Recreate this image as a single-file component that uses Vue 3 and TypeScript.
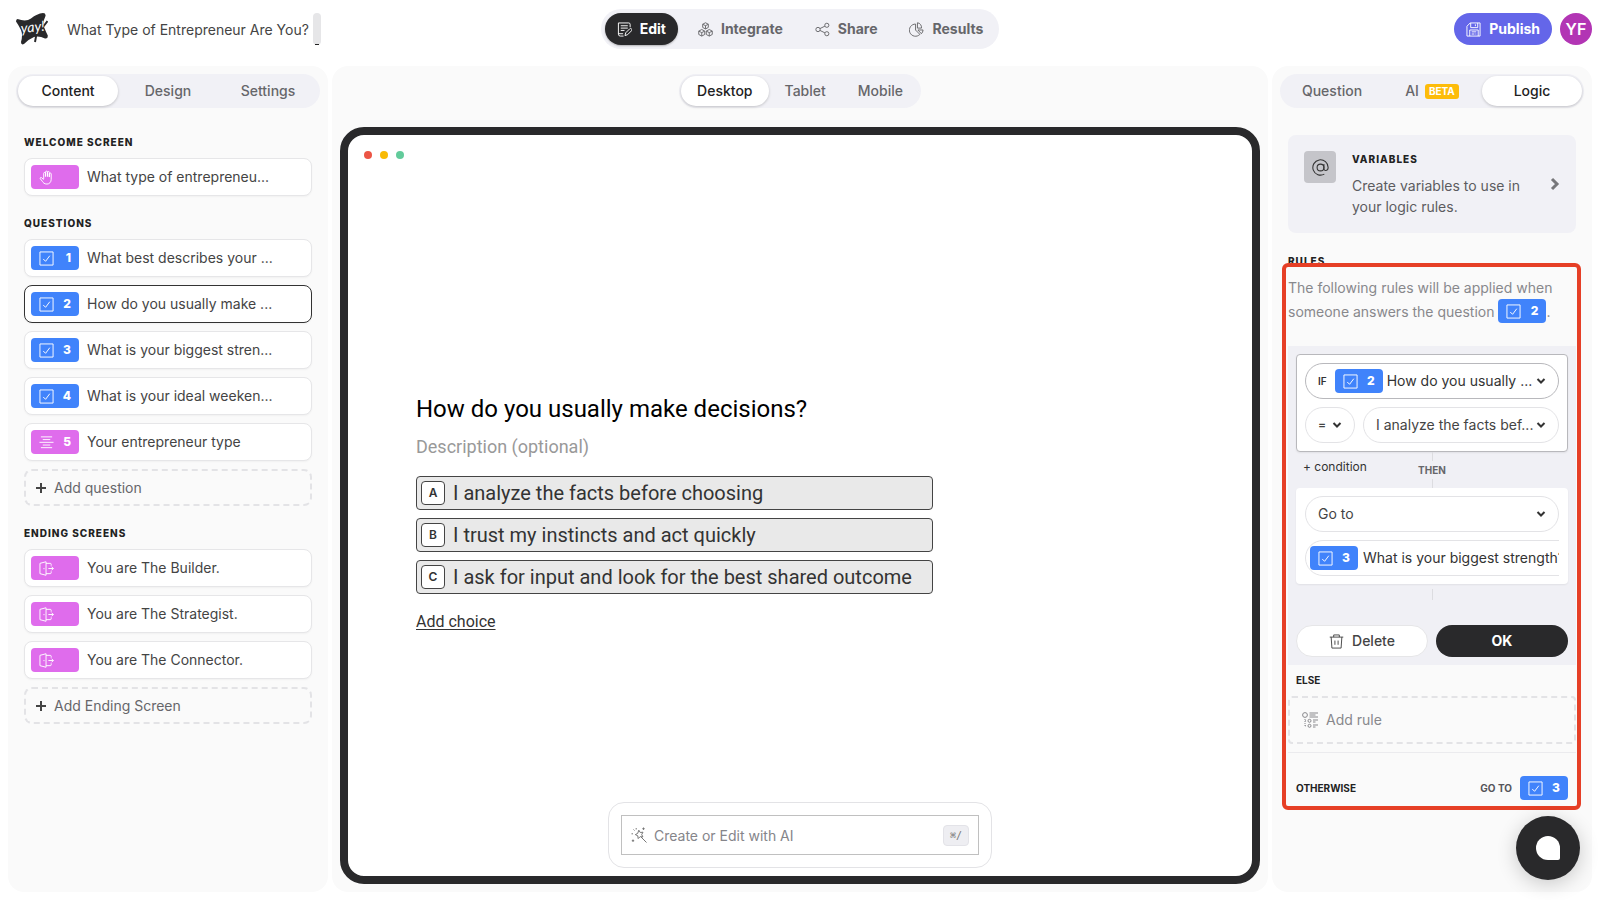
<script setup lang="ts">
import { ref } from 'vue'

interface Item {
  id: number
  text: string
  icon: string
  tone: 'blue' | 'pink'
  num?: number
}

const title = ref('What Type of Entrepreneur Are You?')
const prompt = ref('')

const mainTabs = [
  { label: 'Edit', icon: 'i-edit' },
  { label: 'Integrate', icon: 'i-cubes' },
  { label: 'Share', icon: 'i-share' },
  { label: 'Results', icon: 'i-pie' },
]
const activeMain = ref('Edit')
const leftTabs = ['Content', 'Design', 'Settings']
const activeLeft = ref('Content')
const devices = ['Desktop', 'Tablet', 'Mobile']
const activeDevice = ref('Desktop')
const rightTabs = ['Question', 'AI', 'Logic']
const activeRight = ref('Logic')

const sections: { name: string; items: Item[]; add?: string }[] = [
  {
    name: 'Welcome screen',
    items: [{ id: 10, text: 'What type of entrepreneu...', icon: 'i-hand', tone: 'pink' }],
  },
  {
    name: 'Questions',
    items: [
      { id: 1, num: 1, text: 'What best describes your ...', icon: 'i-check', tone: 'blue' },
      { id: 2, num: 2, text: 'How do you usually make ...', icon: 'i-check', tone: 'blue' },
      { id: 3, num: 3, text: 'What is your biggest stren...', icon: 'i-check', tone: 'blue' },
      { id: 4, num: 4, text: 'What is your ideal weeken...', icon: 'i-check', tone: 'blue' },
      { id: 5, num: 5, text: 'Your entrepreneur type', icon: 'i-lines', tone: 'pink' },
    ],
    add: 'Add question',
  },
  {
    name: 'Ending screens',
    items: [
      { id: 20, text: 'You are The Builder.', icon: 'i-door', tone: 'pink' },
      { id: 21, text: 'You are The Strategist.', icon: 'i-door', tone: 'pink' },
      { id: 22, text: 'You are The Connector.', icon: 'i-door', tone: 'pink' },
    ],
    add: 'Add Ending Screen',
  },
]
const selected = ref(2)

const choices = [
  { key: 'A', text: 'I analyze the facts before choosing' },
  { key: 'B', text: 'I trust my instincts and act quickly' },
  { key: 'C', text: 'I ask for input and look for the best shared outcome' },
]
</script>

<template>
  <svg class="defs" aria-hidden="true">
    <symbol id="i-edit" viewBox="0 0 16 16">
      <path d="M14 5.500V2.500a1.500 1.500 0 0 0-1.500-1.500h-11v12a2 2 0 0 0 2 2H7M1.500 12.500h5M4 4h7.500M4 6.500h7.500M4 9h4M8.500 14.500l.8-3 4.200-4.200a1.200 1.200 0 0 1 2 2l-4.200 4.200z" />
    </symbol>
    <symbol id="i-cubes" viewBox="0 0 16 16">
      <path d="M8 .8l3 1.600v3.400L8 7.400 5 5.800V2.400zM5 2.400l3 1.500 3-1.500M8 3.900v3.500M4 8l3.200 1.700v3.600L4 15 .8 13.300V9.700zM.8 9.700L4 11.300l3.200-1.600M4 11.300V15M12 8l3.200 1.700v3.600L12 15l-3.200-1.700V9.700zM8.800 9.700l3.200 1.600 3.200-1.600M12 11.300V15" />
    </symbol>
    <symbol id="i-share" viewBox="0 0 16 16">
      <circle cx="3.200" cy="8" r="2.300" /><circle cx="12.600" cy="3.500" r="2.200" /><circle cx="12.600" cy="12.500" r="2.200" />
      <path d="M5.300 7l5.300-2.600M5.300 9l5.300 2.600" />
    </symbol>
    <symbol id="i-pie" viewBox="0 0 16 16">
      <path d="M7 2.200A6.500 6.500 0 1 0 11.600 13.200L7 8.600z" />
      <path d="M9 .8v5.700l4.300 0A5 5 0 0 0 9 .8M9.500 8.500h5.500a6 6 0 0 1-1.800 4z" />
    </symbol>
    <symbol id="i-save" viewBox="0 0 16 16">
      <path d="M4.500 1H15v14H1V4.500zM5 1v5h7.500V1M10 2.500v2M4 15V8.500h9V15M6 10.500h5M6 12.800h3M10 12.800h1" />
    </symbol>
    <symbol id="i-check" viewBox="0 0 16 16">
      <path d="M1 1h14v14H1zM4.500 8.500L7 11l4.500-6" />
    </symbol>
    <symbol id="i-lines" viewBox="0 0 16 16">
      <path d="M2 2h12M4 4.900h8M.5 7.800h15M4 10.700h8M2 13.500h12" />
    </symbol>
    <symbol id="i-hand" viewBox="0 0 16 16">
      <path d="M5 9.500V3.600a1 1 0 0 1 2 0V7M7 7V2.200a1 1 0 0 1 2 0V7M9 7V2.600a1 1 0 0 1 2 0V7.500M11 7.500V4.200a1 1 0 0 1 2 0V10c0 3-2 5-4.500 5C5.500 15 4.500 13.500 3.500 12L1.500 9.500c-.8-1 .4-2 1.300-1.300L5 10.200" />
    </symbol>
    <symbol id="i-door" viewBox="0 0 16 16">
      <path d="M1 2.500L7.500.8v14.400L1 13.500zM5.300 7.500v1.200M7.500 2.500H12a1 1 0 0 1 1 1V5M7.500 13.500H12a1 1 0 0 0 1-1V11M10 8h5.300M13.300 6l2 2-2 2" />
    </symbol>
    <symbol id="i-at" viewBox="0 0 16 16">
      <circle cx="8" cy="8" r="3.200" />
      <path d="M11.200 4.800v4.400c0 2.400 4 2.200 4-1.200A7.200 7.200 0 1 0 11.600 14.200" />
    </symbol>
    <symbol id="i-trash" viewBox="0 0 16 16">
      <path d="M.8 3.300h14.400M5 3.300V1h6v2.300M2.300 3.300l.8 11.700h9.800l.8-11.700M6.300 7v4.500M9.700 7v4.500" />
    </symbol>
    <symbol id="i-rule" viewBox="0 0 16 16">
      <circle cx="3" cy="3" r="2.400" /><circle cx="7.500" cy="8.800" r="1.500" /><circle cx="7.500" cy="13.800" r="1.500" />
      <path d="M7.500 1h8.500M7.500 3h6M7.500 5h8.500M11 8h5M11 10h2.500M11 13h5M11 15h2.500" />
      <path d="M3 7v7.500M3 8.800h2M3 13.800h2" stroke-dasharray="1 1" />
    </symbol>
    <symbol id="i-wand" viewBox="0 0 16 16">
      <path d="M7.800 3.200l1.500 2.300 2.700-.3-1.300 2.300 1.200 2.500-2.700-.4-2 2-.4-2.800-2.500-1.200 2.400-1.200zM10 10l5.500 5.500M5.200 1v1.500M.5 6.800h1.500M12.500.5v2.400M11.300 1.700h2.400M2 12.500v2.400M.8 13.700h2.400M2.500 2.500l1 1" />
    </symbol>
    <symbol id="i-down" viewBox="0 0 10 10"><path d="M1.500 3l3.500 3.500L8.500 3" /></symbol>
  </svg>

  <div class="page">
    <header class="top">
      <div class="brand">
        <svg class="logo" viewBox="0 0 32 32" role="img" aria-label="Yay!">
          <path d="M1.500 6Q10 9 15 5.500 21 .5 27 0 30 0 29.500 3 26.500 9 28 14 30 19 31.800 22.500 32 26 29 25.500 23 22.500 18 24 12 26.500 8 31 5 32.500 5 29 7 22 5 17 2.500 12 0 8.500 0 6 1.500 6z" />
          <path class="swash" d="M20.500 17Q20.500 23 19 29M27 14L31.500 8" />
          <text x="5" y="19" transform="rotate(-6 16 16)">yay!</text>
        </svg>
        <input v-model="title" class="title" aria-label="Form title" />
        <span class="thumb"></span>
      </div>
      <nav class="main-tabs" aria-label="Main">
        <button v-for="t in mainTabs" :key="t.label" type="button" :class="{ on: t.label === activeMain }" @click="activeMain = t.label">
          <svg class="ico"><use :href="'#' + t.icon" /></svg>{{ t.label }}
        </button>
      </nav>
      <div class="account">
        <button type="button" class="publish"><svg class="ico"><use href="#i-save" /></svg>Publish</button>
        <button type="button" class="avatar">YF</button>
      </div>
    </header>

    <main>
      <aside class="panel side">
        <div class="tabs wide">
          <button v-for="t in leftTabs" :key="t" type="button" :class="{ on: t === activeLeft }" @click="activeLeft = t">{{ t }}</button>
        </div>
        <div class="body">
          <section v-for="s in sections" :key="s.name" class="group">
            <h2 class="label">{{ s.name }}</h2>
            <div class="list">
              <button v-for="i in s.items" :key="i.id" type="button" class="item" :class="{ picked: i.id === selected }" @click="selected = i.id">
                <span class="chip" :class="i.tone"><svg class="ico"><use :href="'#' + i.icon" /></svg><b v-if="i.num">{{ i.num }}</b></span>
                <span>{{ i.text }}</span>
              </button>
              <button v-if="s.add" type="button" class="add">
                <svg class="plus" viewBox="0 0 10 10"><path d="M5 0v10M0 5h10" /></svg>{{ s.add }}
              </button>
            </div>
          </section>
        </div>
      </aside>

      <section class="panel stage">
        <div class="tabs">
          <button v-for="t in devices" :key="t" type="button" :class="{ on: t === activeDevice }" @click="activeDevice = t">{{ t }}</button>
        </div>
        <div class="frame">
          <div class="dots"><i class="r"></i><i class="y"></i><i class="g"></i></div>
          <div class="canvas">
            <div class="question">
              <h1>How do you usually make decisions?</h1>
              <p class="desc">Description (optional)</p>
              <ul>
                <li v-for="c in choices" :key="c.key"><kbd>{{ c.key }}</kbd>{{ c.text }}</li>
              </ul>
              <a href="#" class="add-choice">Add choice</a>
            </div>
          </div>
          <div class="ai">
            <label class="ai-field">
              <svg class="wand"><use href="#i-wand" /></svg>
              <input v-model="prompt" placeholder="Create or Edit with AI" aria-label="Create or Edit with AI" />
              <kbd>⌘/</kbd>
            </label>
          </div>
        </div>
      </section>

      <aside class="panel side">
        <div class="tabs wide">
          <button v-for="t in rightTabs" :key="t" type="button" :class="{ on: t === activeRight }" @click="activeRight = t">
            {{ t }}<span v-if="t === 'AI'" class="beta">BETA</span>
          </button>
        </div>
        <div class="body logic">
          <a href="#" class="variables">
            <span class="at"><svg><use href="#i-at" /></svg></span>
            <span class="var-text">
              <strong class="label">Variables</strong>
              <span>Create variables to use in your logic rules.</span>
            </span>
            <svg class="next" viewBox="0 0 10 14"><path d="M2 2l5 5-5 5" /></svg>
          </a>

          <section class="rules">
            <h2 class="label">Rules</h2>
            <p class="intro">The following rules will be applied when someone answers the question <span class="chip blue"><svg class="ico"><use href="#i-check" /></svg><b>2</b></span>.</p>

            <div class="rule">
              <div class="card strong">
                <div class="field dark">
                  <label for="if-q" class="if">IF</label>
                  <span class="chip blue"><svg class="ico"><use href="#i-check" /></svg><b>2</b></span>
                  <select id="if-q"><option>How do you usually ...</option></select>
                  <svg class="down"><use href="#i-down" /></svg>
                </div>
                <div class="pair">
                  <div class="field op">
                    <select aria-label="Operator"><option>=</option></select>
                    <svg class="down"><use href="#i-down" /></svg>
                  </div>
                  <div class="field answer">
                    <select aria-label="Answer"><option>I analyze the facts bef...</option></select>
                    <svg class="down"><use href="#i-down" /></svg>
                  </div>
                </div>
              </div>
              <div class="joint">
                <button type="button" class="cond">+ condition</button>
                <span class="then">THEN</span>
              </div>
              <div class="card">
                <div class="field action">
                  <select aria-label="Action"><option>Go to</option></select>
                  <svg class="down"><use href="#i-down" /></svg>
                </div>
                <div class="clip">
                  <div class="field target">
                    <span class="chip blue"><svg class="ico"><use href="#i-check" /></svg><b>3</b></span>
                    <select aria-label="Target question"><option>What is your biggest strength?</option></select>
                  </div>
                </div>
              </div>
              <div class="tail"></div>
              <div class="actions">
                <button type="button" class="delete"><svg class="ico"><use href="#i-trash" /></svg>Delete</button>
                <button type="button" class="ok">OK</button>
              </div>
            </div>

            <h3 class="mini">ELSE</h3>
            <button type="button" class="add-rule"><svg><use href="#i-rule" /></svg>Add rule</button>
            <hr />
            <div class="otherwise">
              <h3 class="mini">OTHERWISE</h3>
              <span class="goto">GO TO</span>
              <span class="chip blue"><svg class="ico"><use href="#i-check" /></svg><b>3</b></span>
            </div>
            <div class="highlight"></div>
          </section>
        </div>
      </aside>
    </main>

    <button type="button" class="chat" aria-label="Open chat"><span></span></button>
  </div>
</template>

<style>
body { background: #fff; }
</style>

<style scoped>
* { box-sizing: border-box; }
.defs { position: absolute; width: 0; height: 0; }
.page {
  min-height: 100vh;
  display: flex;
  flex-direction: column;
  font: 14px/20px Inter, "Liberation Sans", sans-serif;
  color: #444;
}
button, input, select { font: inherit; color: inherit; border: 0; background: none; padding: 0; margin: 0; }
button { cursor: pointer; }
svg { fill: none; stroke: currentColor; stroke-width: 1; flex: none; }
h1, h2, h3, p, ul { margin: 0; padding: 0; font-weight: 400; }
.ico { width: 15px; height: 15px; }

.top {
  display: grid;
  grid-template-columns: 1fr auto 1fr;
  align-items: center;
  padding: 9px 8px 17px;
}
.brand { display: flex; align-items: center; padding-left: 8px; }
.logo { width: 32px; height: 32px; }
.logo path { fill: #29292b; stroke: none; }
.logo .swash { fill: none; stroke: #29292b; stroke-width: 2; }
.logo text { font: italic 400 14px Lato, sans-serif; fill: #fff; stroke: none; }
.title { width: 246px; margin-left: 19px; height: 24px; }
.thumb {
  width: 8px; height: 32px; border-radius: 4px; background: #e6e6e8;
  display: flex; align-items: flex-end; justify-content: center;
}
.thumb::after { content: ""; width: 4px; height: 1px; background: #222; }
.main-tabs { display: flex; gap: 8px; padding: 4px; border-radius: 20px; background: #f1f1f6; }
.main-tabs button {
  display: flex; align-items: center; gap: 8px; height: 32px; padding: 0 12px;
  border-radius: 16px; font-weight: 700; color: #66666a;
}
.main-tabs .on { background: #29292b; color: #fff; box-shadow: 0 1px 2px #0004; }
.account { display: flex; justify-content: flex-end; gap: 8px; }
.publish {
  display: flex; align-items: center; gap: 8px; height: 32px; padding: 0 12px;
  border-radius: 16px; background: #6466e9; color: #fff; font-weight: 700;
}
.avatar { width: 32px; height: 32px; border-radius: 50%; background: #b235b4; color: #fff; font-size: 16px; font-weight: 600; }

main {
  flex: 1;
  display: grid;
  grid-template-columns: 320px 1fr 320px;
  gap: 4px;
  padding: 0 8px 8px;
}
.panel { background: #fafafa; border-radius: 16px; padding: 8px; min-width: 0; }
.tabs { display: flex; padding: 2px; border-radius: 17px; background: #f1f1f6; }
.tabs button {
  height: 30px; padding: 0 16px; border-radius: 15px; font-weight: 500; color: #66666a;
  display: flex; align-items: center; justify-content: center;
}
.tabs .on { background: #fff; color: #222; box-shadow: 0 1px 3px #0003; }
.tabs.wide button { flex: 1 1 0; padding: 0; }
.beta { margin-left: 6px; padding: 0 4px; border-radius: 3px; background: #fdbc0a; color: #fff; font-size: 10px; line-height: 15px; font-weight: 700; }
.body { padding: 26px 8px 0; }
.body.logic { padding-top: 27px; }

.label { display: block; font-size: 10px; line-height: 16px; font-weight: 800; letter-spacing: 1px; text-transform: uppercase; color: #222; }
.group + .group { margin-top: 19px; }
.list { display: flex; flex-direction: column; gap: 8px; margin-top: 8px; }
.item {
  display: flex; align-items: center; gap: 8px; height: 38px; padding: 0 6px; text-align: left;
  border: 1px solid #e6e6e8; border-radius: 8px; background: #fff; box-shadow: 0 1px 2px #0000000a;
}
.item.picked { border-color: #333; }
.chip {
  display: inline-flex; align-items: center; justify-content: space-between; flex: none;
  width: 48px; height: 24px; padding: 0 8px; border-radius: 4px; color: #fff; font-size: 12px; line-height: 20px;
}
.chip b { font-weight: 800; }
.blue { background: #4083fb; }
.pink { background: #df6cec; }
.add {
  display: flex; align-items: center; gap: 8px; height: 37px; padding: 0 10px;
  border: 2px dashed #e3e3e6; border-radius: 8px; color: #66666a;
}
.plus { width: 10px; height: 10px; stroke-width: 2; color: #444; }

.stage { display: flex; flex-direction: column; align-items: center; }
.frame {
  align-self: stretch; flex: 1; margin-top: 19px; display: flex; flex-direction: column;
  border: 8px solid #29292b; border-radius: 24px; background: #fff; padding: 16px 16px 8px;
}
.dots { display: flex; gap: 8px; }
.dots i { width: 8px; height: 8px; border-radius: 50%; }
.r { background: #ec5545; }
.y { background: #f8ba05; }
.g { background: #62cb9b; }
.canvas { flex: 1; display: flex; flex-direction: column; justify-content: center; padding-top: 64px; }
.question { width: 100%; max-width: 768px; margin: 0 auto; font-family: Roboto, sans-serif; color: #333; }
h1 { font-size: 24px; line-height: 32px; color: #000; }
.desc { margin-top: 11px; font-size: 18px; line-height: 22px; color: #999; }
ul { list-style: none; width: fit-content; margin: 18px 0 17px; display: grid; gap: 8px; }
li {
  display: flex; align-items: center; gap: 8px; height: 34px; padding: 0 20px 0 4px;
  border: 1px solid #444; border-radius: 4px; background: #e9e9e9; font-size: 20px;
}
li kbd {
  width: 24px; height: 24px; border: 1px solid #444; border-radius: 4px; background: #fff;
  font: 600 12px/22px Inter, sans-serif; text-align: center;
}
.add-choice { font-size: 16px; line-height: 22px; color: #333; text-underline-offset: 2px; }
.ai { align-self: center; width: 384px; max-width: 100%; padding: 12px; border: 1px solid #e3e3e6; border-radius: 16px; }
.ai-field { display: flex; align-items: center; gap: 7px; height: 40px; padding: 0 9px; border: 1px solid #c0c0c0; }
.wand { width: 16px; height: 16px; color: #777; }
.ai-field input { flex: 1; min-width: 0; height: 24px; outline: 0; }
.ai-field input::placeholder { color: #85858a; opacity: 1; }
.ai-field kbd { width: 26px; border-radius: 4px; background: #eeeef2; border: 1px solid #e3e3e8; font: 10px/19px "DejaVu Sans Mono", monospace; text-align: center; color: #777; }

.variables {
  display: flex; gap: 16px; padding: 16px; border-radius: 8px; background: #f1f1f6;
  color: #5c5c60; text-decoration: none;
}
.at { width: 32px; height: 32px; flex: none; border-radius: 4px; background: #c5c5ca; color: #333; display: grid; place-items: center; }
.at svg { width: 17px; height: 17px; }
.var-text { flex: 1; line-height: 21px; }
.var-text .label { margin-bottom: 8px; line-height: 16px; }
.next { width: 10px; height: 14px; align-self: center; stroke-width: 3; color: #77777a; }

.rules { position: relative; margin-top: 20px; }
.intro { margin-top: 7px; line-height: 24px; color: #88888c; }
.intro .chip { vertical-align: middle; margin-top: -4px; }
.rule { margin-top: 22px; padding: 8px; background: #f0f0f5; }
.card { padding: 8px 9px; background: #fff; border-radius: 4px; display: grid; gap: 8px; box-shadow: 0 1px 2px #0001; }
.card.strong { padding: 8px; border: 1px solid #b8b8bc; }
.field { display: flex; align-items: center; height: 36px; padding: 0 12px; border: 1px solid #e3e3e6; border-radius: 18px; color: #444; }
.field.dark { border-color: #b8b8bc; color: #333; }
.field select { flex: 1; min-width: 0; height: 24px; appearance: none; outline: 0; }
.down { width: 10px; height: 10px; stroke-width: 2; color: #333; }
.if { font-size: 10px; font-weight: 600; margin-right: 8px; }
.dark .chip { margin-right: 4px; }
.pair { display: grid; grid-template-columns: 50px 1fr; gap: 8px; }
.op select { font-weight: 600; font-size: 12px; }
.clip { overflow: hidden; min-width: 0; }
.target { width: 272px; padding: 0 4px; gap: 5px; color: #333; }
.joint { display: flex; align-items: center; position: relative; height: 36px; }
.joint::before, .tail::before { content: ""; position: absolute; left: 50%; width: 1px; background: #dcdce0; }
.joint::before { top: 0; bottom: 0; }
.cond { padding: 0 7px 6px; font-size: 12px; color: #333; }
.then { position: absolute; left: 50%; top: 50%; transform: translate(-50%, -50%); padding: 0 4px; background: #f0f0f5; font-size: 10px; font-weight: 700; line-height: 18px; color: #66666a; }
.tail { position: relative; height: 41px; }
.tail::before { top: 5px; height: 11px; }
.actions { display: grid; grid-template-columns: 1fr 1fr; gap: 8px; }
.actions button { display: flex; align-items: center; justify-content: center; gap: 8px; height: 32px; border-radius: 16px; }
.delete { background: #fff; border: 1px solid #e6e6e8; color: #444; font-weight: 500; }
.ok { background: #29292b; color: #fff; font-weight: 700; }
.mini { margin: 7px 8px 8px; font-size: 10px; line-height: 16px; font-weight: 700; color: #222; }
.add-rule { display: flex; align-items: center; gap: 8px; width: 100%; height: 48px; padding: 0 12px; border: 2px dashed #e3e3e6; border-radius: 4px; color: #88888c; }
.add-rule svg { width: 16px; height: 16px; }
hr { margin: 8px 0 23px; border: 0; border-top: 1px solid #ebebee; }
.otherwise { display: flex; align-items: center; gap: 8px; padding: 0 8px; }
.otherwise .mini { flex: 1; margin: 0; }
.goto { font-size: 10px; font-weight: 700; color: #55555a; }
.highlight { position: absolute; inset: 10px -5px -10px -6px; border: 4px solid #e63f26; border-radius: 6px; pointer-events: none; }

.chat {
  position: fixed; right: 20px; bottom: 20px; width: 64px; height: 64px; border-radius: 50%;
  background: #29292b; box-shadow: 0 4px 20px #0003; display: grid; place-items: center;
}
.chat span { width: 24px; height: 24px; background: #fff; border-radius: 12px 12px 2px 12px; }
</style>
